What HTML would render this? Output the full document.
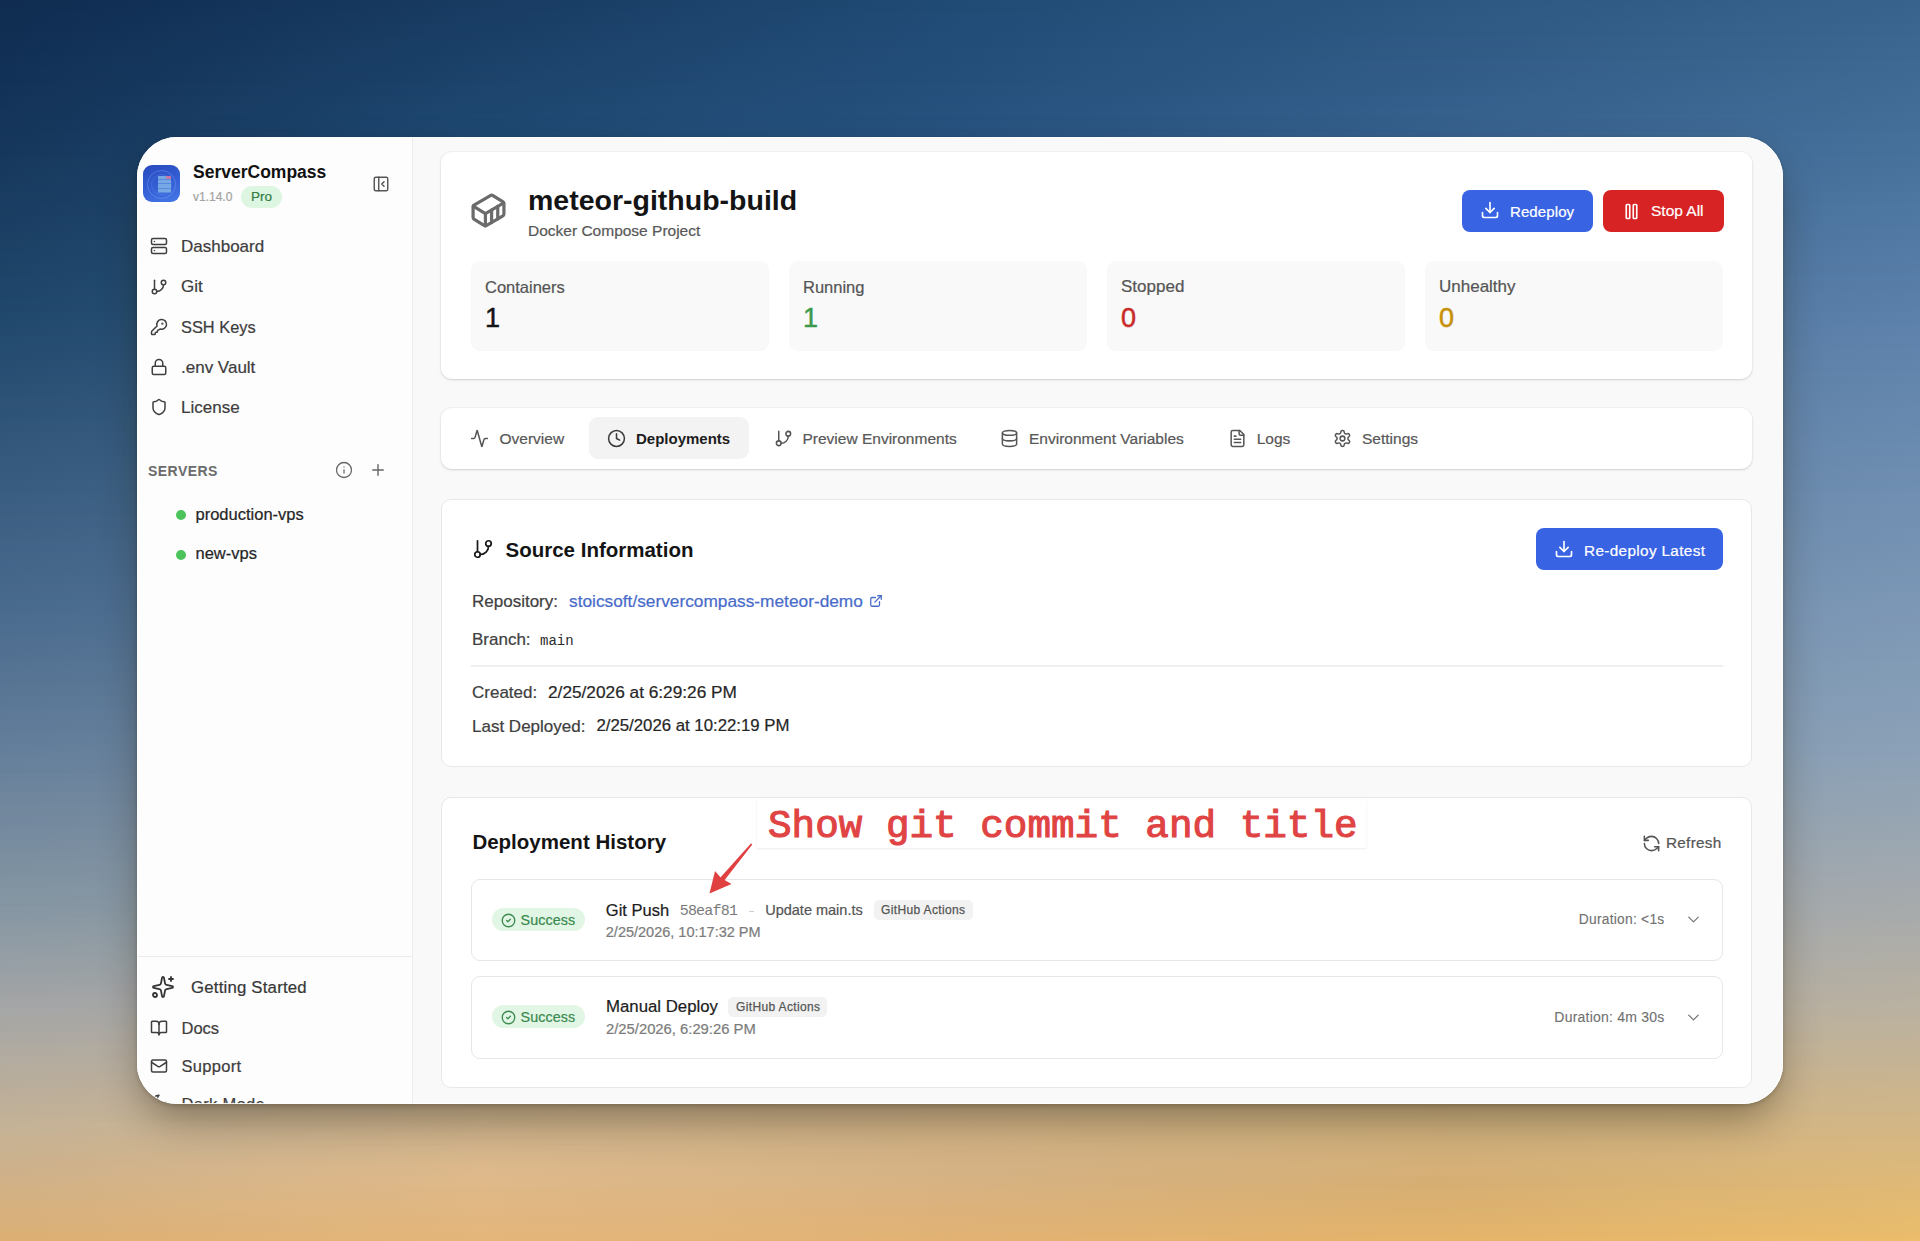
<!DOCTYPE html>
<html><head><meta charset="utf-8">
<style>
*{box-sizing:border-box;margin:0;padding:0}
html,body{width:1920px;height:1241px;overflow:hidden;font-family:"Liberation Sans",sans-serif;color:#1a1a1a;background:#4a6b8e}
#bg div{position:absolute;left:0;width:1920px;height:6px}
.a{position:absolute;white-space:nowrap}
#win{position:absolute;left:137px;top:137px;width:1646px;height:967px;border-radius:40px;overflow:hidden;background:#f9f9f9;box-shadow:0 20px 44px -8px rgba(35,25,5,0.45),0 2px 4px rgba(20,15,0,0.18)}
#inner{position:absolute;left:-137px;top:-137px;width:1920px;height:1241px}
svg{position:absolute;overflow:visible}
.ic{fill:none;stroke:currentColor;stroke-linecap:round;stroke-linejoin:round}
</style></head><body>
<div id="bg">
<div style="top:0px;background:linear-gradient(90deg,#0f2b50,#183b62,#204b75,#2c5780,#37638c)"></div>
<div style="top:6px;background:linear-gradient(90deg,#0f2c51,#183c63,#204b76,#2d5881,#38648d)"></div>
<div style="top:12px;background:linear-gradient(90deg,#102c51,#193c64,#214c76,#2d5882,#38648e)"></div>
<div style="top:18px;background:linear-gradient(90deg,#102d52,#193d64,#214c77,#2e5982,#39658e)"></div>
<div style="top:24px;background:linear-gradient(90deg,#102d52,#193e65,#214c77,#2e5983,#3a668f)"></div>
<div style="top:30px;background:linear-gradient(90deg,#112e53,#1a3e66,#224d78,#2f5984,#3a668f)"></div>
<div style="top:36px;background:linear-gradient(90deg,#112e53,#1a3f66,#224d78,#2f5a84,#3b6790)"></div>
<div style="top:42px;background:linear-gradient(90deg,#112f54,#1a4067,#224d79,#305a85,#3c6790)"></div>
<div style="top:48px;background:linear-gradient(90deg,#112f54,#1a4068,#234e79,#305b85,#3c6891)"></div>
<div style="top:54px;background:linear-gradient(90deg,#123055,#1b4168,#234e7a,#315b86,#3d6892)"></div>
<div style="top:60px;background:linear-gradient(90deg,#123055,#1b4169,#234e7a,#315c87,#3d6992)"></div>
<div style="top:66px;background:linear-gradient(90deg,#123156,#1b426a,#244f7b,#325c87,#3e6993)"></div>
<div style="top:72px;background:linear-gradient(90deg,#123156,#1c426a,#244f7b,#325c88,#3e6a94)"></div>
<div style="top:78px;background:linear-gradient(90deg,#133156,#1c436b,#244f7b,#325d89,#3f6b94)"></div>
<div style="top:84px;background:linear-gradient(90deg,#133257,#1c446c,#25507c,#335d89,#406b95)"></div>
<div style="top:90px;background:linear-gradient(90deg,#133257,#1c446d,#25507c,#335e8a,#406c95)"></div>
<div style="top:96px;background:linear-gradient(90deg,#143358,#1d456d,#25507d,#345e8b,#416c96)"></div>
<div style="top:102px;background:linear-gradient(90deg,#143358,#1d466e,#26517d,#345f8b,#426d96)"></div>
<div style="top:108px;background:linear-gradient(90deg,#143459,#1d466f,#26517e,#355f8c,#426d97)"></div>
<div style="top:114px;background:linear-gradient(90deg,#143459,#1d476f,#26517e,#35608c,#436e98)"></div>
<div style="top:120px;background:linear-gradient(90deg,#15355a,#1e4770,#27527f,#36608d,#436e98)"></div>
<div style="top:126px;background:linear-gradient(90deg,#15355a,#1e4871,#27527f,#36608e,#446f99)"></div>
<div style="top:132px;background:linear-gradient(90deg,#15365b,#1e4871,#275280,#37618e,#44709a)"></div>
<div style="top:138px;background:linear-gradient(90deg,#16365b,#1f4972,#285380,#37618f,#45709a)"></div>
<div style="top:144px;background:linear-gradient(90deg,#16375c,#1f4a73,#285381,#386290,#46719b)"></div>
<div style="top:150px;background:linear-gradient(90deg,#16375c,#1f4a73,#285381,#386290,#46719b)"></div>
<div style="top:156px;background:linear-gradient(90deg,#17385d,#204b73,#295482,#396391,#47729c)"></div>
<div style="top:162px;background:linear-gradient(90deg,#17395d,#204b74,#2a5582,#3a6491,#48729c)"></div>
<div style="top:168px;background:linear-gradient(90deg,#17395e,#214c74,#2b5582,#3b6491,#49739d)"></div>
<div style="top:174px;background:linear-gradient(90deg,#183a5f,#224c74,#2c5683,#3b6592,#4a749e)"></div>
<div style="top:180px;background:linear-gradient(90deg,#183a5f,#224c75,#2c5683,#3c6592,#4a749e)"></div>
<div style="top:186px;background:linear-gradient(90deg,#183b60,#234d75,#2d5783,#3d6693,#4b759f)"></div>
<div style="top:192px;background:linear-gradient(90deg,#193c60,#234d75,#2e5884,#3e6793,#4c759f)"></div>
<div style="top:198px;background:linear-gradient(90deg,#193c61,#244e76,#2f5884,#3e6793,#4d76a0)"></div>
<div style="top:204px;background:linear-gradient(90deg,#193d62,#254e76,#305985,#3f6894,#4e77a1)"></div>
<div style="top:210px;background:linear-gradient(90deg,#1a3d62,#254f76,#305a85,#406894,#4e77a1)"></div>
<div style="top:216px;background:linear-gradient(90deg,#1a3e63,#264f77,#315a85,#416995,#4f78a2)"></div>
<div style="top:222px;background:linear-gradient(90deg,#1b3f63,#265077,#325b86,#426a95,#5078a2)"></div>
<div style="top:228px;background:linear-gradient(90deg,#1b3f64,#275077,#335c86,#426a96,#5179a3)"></div>
<div style="top:234px;background:linear-gradient(90deg,#1b4064,#275078,#345c87,#436b96,#5279a3)"></div>
<div style="top:240px;background:linear-gradient(90deg,#1c4165,#285178,#345d87,#446b96,#527aa4)"></div>
<div style="top:246px;background:linear-gradient(90deg,#1c4166,#295178,#355e87,#456c97,#537ba5)"></div>
<div style="top:252px;background:linear-gradient(90deg,#1c4266,#295279,#365e88,#456d97,#547ba5)"></div>
<div style="top:258px;background:linear-gradient(90deg,#1d4267,#2a5279,#375f88,#466d98,#557ca6)"></div>
<div style="top:264px;background:linear-gradient(90deg,#1d4367,#2a5379,#385f88,#476e98,#567ca6)"></div>
<div style="top:270px;background:linear-gradient(90deg,#1d4468,#2b537a,#386089,#486e98,#567da7)"></div>
<div style="top:276px;background:linear-gradient(90deg,#1e4469,#2c547a,#396189,#486f99,#577ea8)"></div>
<div style="top:282px;background:linear-gradient(90deg,#1e4569,#2c547a,#3a618a,#497099,#587ea8)"></div>
<div style="top:288px;background:linear-gradient(90deg,#1f466a,#2d547a,#3b628a,#4a709a,#597fa9)"></div>
<div style="top:294px;background:linear-gradient(90deg,#1f466a,#2d557b,#3c638a,#4b719a,#5a7fa9)"></div>
<div style="top:300px;background:linear-gradient(90deg,#1f476b,#2e557b,#3c638b,#4b729a,#5a80aa)"></div>
<div style="top:306px;background:linear-gradient(90deg,#20476b,#2e567b,#3d648b,#4c729b,#5b80aa)"></div>
<div style="top:312px;background:linear-gradient(90deg,#20486c,#2f567c,#3e648c,#4d739b,#5c81ab)"></div>
<div style="top:318px;background:linear-gradient(90deg,#21496d,#30577c,#3f658c,#4e739c,#5d81ab)"></div>
<div style="top:324px;background:linear-gradient(90deg,#22496d,#31587d,#3f668c,#4e749c,#5d82ab)"></div>
<div style="top:330px;background:linear-gradient(90deg,#234a6e,#31587d,#40668d,#4f749c,#5e82ac)"></div>
<div style="top:336px;background:linear-gradient(90deg,#234b6f,#32597e,#41678d,#50759d,#5f83ac)"></div>
<div style="top:342px;background:linear-gradient(90deg,#244c6f,#33597f,#42678e,#51759d,#5f83ac)"></div>
<div style="top:348px;background:linear-gradient(90deg,#254c70,#345a7f,#42688e,#51769d,#6084ac)"></div>
<div style="top:354px;background:linear-gradient(90deg,#264d71,#355b80,#43698f,#52769e,#6184ad)"></div>
<div style="top:360px;background:linear-gradient(90deg,#274e71,#355b80,#44698f,#53779e,#6185ad)"></div>
<div style="top:366px;background:linear-gradient(90deg,#284e72,#365c81,#456a90,#53779e,#6285ad)"></div>
<div style="top:372px;background:linear-gradient(90deg,#284f73,#375d81,#466a90,#54789f,#6386ad)"></div>
<div style="top:378px;background:linear-gradient(90deg,#295073,#385d82,#466b90,#55789f,#6386ad)"></div>
<div style="top:384px;background:linear-gradient(90deg,#2a5074,#395e83,#476b91,#55799f,#6487ae)"></div>
<div style="top:390px;background:linear-gradient(90deg,#2b5175,#395f83,#486c91,#567aa0,#6587ae)"></div>
<div style="top:396px;background:linear-gradient(90deg,#2c5276,#3a5f84,#486d92,#577aa0,#6587ae)"></div>
<div style="top:402px;background:linear-gradient(90deg,#2d5276,#3b6084,#496d92,#587ba0,#6688ae)"></div>
<div style="top:408px;background:linear-gradient(90deg,#2d5377,#3c6085,#4a6e93,#587ba1,#6788af)"></div>
<div style="top:414px;background:linear-gradient(90deg,#2e5478,#3d6185,#4b6e93,#597ca1,#6789af)"></div>
<div style="top:420px;background:linear-gradient(90deg,#2f5578,#3d6286,#4c6f94,#5a7ca1,#6889af)"></div>
<div style="top:426px;background:linear-gradient(90deg,#305579,#3e6286,#4c7094,#5a7da2,#698aaf)"></div>
<div style="top:432px;background:linear-gradient(90deg,#31567a,#3f6387,#4d7094,#5b7da2,#698aaf)"></div>
<div style="top:438px;background:linear-gradient(90deg,#32577a,#406488,#4e7195,#5c7ea2,#6a8bb0)"></div>
<div style="top:444px;background:linear-gradient(90deg,#32577b,#406488,#4e7195,#5d7ea3,#6b8bb0)"></div>
<div style="top:450px;background:linear-gradient(90deg,#33587c,#416589,#4f7296,#5d7fa3,#6b8cb0)"></div>
<div style="top:456px;background:linear-gradient(90deg,#34597c,#426689,#507296,#5e7fa3,#6c8cb0)"></div>
<div style="top:462px;background:linear-gradient(90deg,#355a7d,#43668a,#517397,#5f80a4,#6c8cb0)"></div>
<div style="top:468px;background:linear-gradient(90deg,#365a7e,#44678a,#527497,#5f80a4,#6d8db1)"></div>
<div style="top:474px;background:linear-gradient(90deg,#375b7e,#44688b,#527498,#6081a4,#6e8db1)"></div>
<div style="top:480px;background:linear-gradient(90deg,#385c7f,#45688c,#537598,#6181a5,#6e8eb1)"></div>
<div style="top:486px;background:linear-gradient(90deg,#385c80,#46698c,#547599,#6182a5,#6f8eb1)"></div>
<div style="top:492px;background:linear-gradient(90deg,#395d80,#47698d,#547699,#6282a5,#708fb2)"></div>
<div style="top:498px;background:linear-gradient(90deg,#3a5e81,#486a8d,#557699,#6383a6,#708fb2)"></div>
<div style="top:504px;background:linear-gradient(90deg,#3b5e82,#486b8e,#56779a,#6483a6,#7190b2)"></div>
<div style="top:510px;background:linear-gradient(90deg,#3c5f82,#496b8e,#57789a,#6484a6,#7290b2)"></div>
<div style="top:516px;background:linear-gradient(90deg,#3d6083,#4a6c8f,#58789b,#6584a7,#7291b2)"></div>
<div style="top:522px;background:linear-gradient(90deg,#3d6084,#4b6d90,#58799b,#6685a7,#7391b3)"></div>
<div style="top:528px;background:linear-gradient(90deg,#3e6184,#4c6d90,#59799c,#6685a7,#7492b3)"></div>
<div style="top:534px;background:linear-gradient(90deg,#3f6285,#4c6e91,#5a7a9c,#6786a8,#7492b3)"></div>
<div style="top:540px;background:linear-gradient(90deg,#406386,#4d6f91,#5a7b9d,#6887a8,#7592b3)"></div>
<div style="top:546px;background:linear-gradient(90deg,#416387,#4e6f92,#5b7b9d,#6887a8,#7693b4)"></div>
<div style="top:552px;background:linear-gradient(90deg,#426487,#4f7092,#5c7c9e,#6988a9,#7693b4)"></div>
<div style="top:558px;background:linear-gradient(90deg,#426588,#507093,#5d7c9e,#6a88a9,#7794b4)"></div>
<div style="top:564px;background:linear-gradient(90deg,#436589,#507193,#5e7d9e,#6b89a9,#7894b4)"></div>
<div style="top:570px;background:linear-gradient(90deg,#446689,#517294,#5e7d9f,#6b89aa,#7895b4)"></div>
<div style="top:576px;background:linear-gradient(90deg,#45678a,#527295,#5f7e9f,#6c8aaa,#7995b5)"></div>
<div style="top:582px;background:linear-gradient(90deg,#46688b,#537395,#607fa0,#6d8aaa,#7a96b5)"></div>
<div style="top:588px;background:linear-gradient(90deg,#47688b,#547496,#607fa0,#6d8bab,#7a96b5)"></div>
<div style="top:594px;background:linear-gradient(90deg,#47698c,#547496,#6180a1,#6e8bab,#7b97b5)"></div>
<div style="top:600px;background:linear-gradient(90deg,#486a8d,#557597,#6280a1,#6f8cab,#7c97b6)"></div>
<div style="top:606px;background:linear-gradient(90deg,#496a8d,#567697,#6381a2,#708cac,#7c98b6)"></div>
<div style="top:612px;background:linear-gradient(90deg,#4a6b8e,#577698,#6482a2,#708dac,#7d98b6)"></div>
<div style="top:618px;background:linear-gradient(90deg,#4b6c8f,#587798,#6482a2,#718dac,#7e98b6)"></div>
<div style="top:624px;background:linear-gradient(90deg,#4c6d8f,#597899,#6583a3,#728eac,#7e99b6)"></div>
<div style="top:630px;background:linear-gradient(90deg,#4d6e90,#5a7899,#6683a3,#738eac,#7f99b6)"></div>
<div style="top:636px;background:linear-gradient(90deg,#4f6e90,#5b799a,#6784a3,#738fad,#7f9ab6)"></div>
<div style="top:642px;background:linear-gradient(90deg,#506f91,#5c7a9a,#6885a3,#748fad,#809ab6)"></div>
<div style="top:648px;background:linear-gradient(90deg,#517091,#5d7b9a,#6985a4,#7590ad,#819ab6)"></div>
<div style="top:654px;background:linear-gradient(90deg,#527192,#5e7b9b,#6a86a4,#7690ad,#819bb6)"></div>
<div style="top:660px;background:linear-gradient(90deg,#537292,#5f7c9b,#6b86a4,#7691ad,#829bb6)"></div>
<div style="top:666px;background:linear-gradient(90deg,#547393,#607d9c,#6c87a5,#7791ae,#839cb6)"></div>
<div style="top:672px;background:linear-gradient(90deg,#567393,#617e9c,#6c88a5,#7892ae,#839cb6)"></div>
<div style="top:678px;background:linear-gradient(90deg,#577494,#627e9d,#6d88a5,#7992ae,#849cb6)"></div>
<div style="top:684px;background:linear-gradient(90deg,#587594,#637f9d,#6e89a5,#7993ae,#849db7)"></div>
<div style="top:690px;background:linear-gradient(90deg,#597695,#64809d,#6f8aa6,#7a93ae,#859db7)"></div>
<div style="top:696px;background:linear-gradient(90deg,#5a7795,#65819e,#708aa6,#7b94ae,#869eb7)"></div>
<div style="top:702px;background:linear-gradient(90deg,#5b7896,#66819e,#718ba6,#7c94ae,#869eb7)"></div>
<div style="top:708px;background:linear-gradient(90deg,#5c7997,#67829f,#728ba7,#7c95af,#879eb7)"></div>
<div style="top:714px;background:linear-gradient(90deg,#5e7997,#68839f,#738ca7,#7d95af,#889fb7)"></div>
<div style="top:720px;background:linear-gradient(90deg,#5f7a98,#69839f,#748da7,#7e96af,#889fb7)"></div>
<div style="top:726px;background:linear-gradient(90deg,#607b98,#6a84a0,#748da7,#7f96af,#89a0b7)"></div>
<div style="top:732px;background:linear-gradient(90deg,#617c99,#6b85a0,#758ea8,#7f97af,#89a0b7)"></div>
<div style="top:738px;background:linear-gradient(90deg,#627d99,#6c86a1,#768fa8,#8097b0,#8aa0b7)"></div>
<div style="top:744px;background:linear-gradient(90deg,#637e9a,#6d86a1,#778fa8,#8198b0,#8ba1b7)"></div>
<div style="top:750px;background:linear-gradient(90deg,#657e9a,#6e87a1,#7890a8,#8298b0,#8ca1b7)"></div>
<div style="top:756px;background:linear-gradient(90deg,#667f9a,#7088a1,#7990a8,#8399af,#8da2b6)"></div>
<div style="top:762px;background:linear-gradient(90deg,#67809b,#7189a2,#7a91a8,#849aaf,#8ea2b6)"></div>
<div style="top:768px;background:linear-gradient(90deg,#68819b,#7289a2,#7c92a8,#859aaf,#8fa2b6)"></div>
<div style="top:774px;background:linear-gradient(90deg,#6a829b,#738aa2,#7d92a8,#869aaf,#90a3b5)"></div>
<div style="top:780px;background:linear-gradient(90deg,#6b839c,#748ba2,#7e93a8,#879baf,#91a3b5)"></div>
<div style="top:786px;background:linear-gradient(90deg,#6c849c,#768ca2,#7f94a8,#889cae,#92a3b4)"></div>
<div style="top:792px;background:linear-gradient(90deg,#6e859c,#778da2,#8094a8,#8a9cae,#93a4b4)"></div>
<div style="top:798px;background:linear-gradient(90deg,#6f869d,#788da2,#8195a8,#8b9cae,#94a4b4)"></div>
<div style="top:804px;background:linear-gradient(90deg,#70879d,#798ea3,#8396a8,#8c9dae,#95a4b3)"></div>
<div style="top:810px;background:linear-gradient(90deg,#71889d,#7b8fa3,#8496a8,#8d9ead,#96a5b3)"></div>
<div style="top:816px;background:linear-gradient(90deg,#73889e,#7c90a3,#8597a8,#8e9ead,#97a5b2)"></div>
<div style="top:822px;background:linear-gradient(90deg,#74899e,#7d90a3,#8697a8,#8f9ead,#98a6b2)"></div>
<div style="top:828px;background:linear-gradient(90deg,#758a9e,#7e91a3,#8798a8,#909fad,#99a6b2)"></div>
<div style="top:834px;background:linear-gradient(90deg,#768b9f,#7f92a3,#8899a8,#91a0ad,#9aa6b1)"></div>
<div style="top:840px;background:linear-gradient(90deg,#788c9f,#8193a4,#8a99a8,#92a0ac,#9ba7b1)"></div>
<div style="top:846px;background:linear-gradient(90deg,#798d9f,#8294a4,#8b9aa8,#94a0ac,#9ca7b0)"></div>
<div style="top:852px;background:linear-gradient(90deg,#7a8ea0,#8394a4,#8c9ba8,#95a1ac,#9da7b0)"></div>
<div style="top:858px;background:linear-gradient(90deg,#7c8fa0,#8495a4,#8d9ba8,#96a2ac,#9fa8b0)"></div>
<div style="top:864px;background:linear-gradient(90deg,#7d90a0,#8696a4,#8e9ca8,#97a2ab,#a0a8af)"></div>
<div style="top:870px;background:linear-gradient(90deg,#7e91a1,#8797a4,#8f9da8,#98a2ab,#a1a8af)"></div>
<div style="top:876px;background:linear-gradient(90deg,#7f92a1,#8897a4,#919da8,#99a3ab,#a2a9ae)"></div>
<div style="top:882px;background:linear-gradient(90deg,#8192a1,#8998a5,#929ea8,#9aa4ab,#a3a9ae)"></div>
<div style="top:888px;background:linear-gradient(90deg,#8293a2,#8a99a5,#939ea8,#9ba4ab,#a4aaae)"></div>
<div style="top:894px;background:linear-gradient(90deg,#8394a2,#8c9aa5,#949fa8,#9ca4aa,#a5aaad)"></div>
<div style="top:900px;background:linear-gradient(90deg,#8495a2,#8d9aa5,#95a0a8,#9ea5aa,#a6aaad)"></div>
<div style="top:906px;background:linear-gradient(90deg,#8696a3,#8e9ba5,#96a0a8,#9fa6aa,#a7abac)"></div>
<div style="top:912px;background:linear-gradient(90deg,#8797a3,#8f9ca5,#98a1a8,#a0a6aa,#a8abac)"></div>
<div style="top:918px;background:linear-gradient(90deg,#8998a3,#919da5,#99a2a7,#a1a7a9,#a9abab)"></div>
<div style="top:924px;background:linear-gradient(90deg,#8b99a3,#939ea5,#9ba2a7,#a2a7a9,#aaacaa)"></div>
<div style="top:930px;background:linear-gradient(90deg,#8d9aa4,#949ea5,#9ca3a7,#a4a8a8,#abacaa)"></div>
<div style="top:936px;background:linear-gradient(90deg,#8f9ba4,#969fa5,#9ea4a6,#a5a8a8,#adada9)"></div>
<div style="top:942px;background:linear-gradient(90deg,#909ca4,#98a0a5,#9fa4a6,#a6a9a7,#aeada8)"></div>
<div style="top:948px;background:linear-gradient(90deg,#929da4,#99a1a5,#a1a5a6,#a8a9a7,#afada7)"></div>
<div style="top:954px;background:linear-gradient(90deg,#949ea4,#9ba2a5,#a2a6a6,#a9aaa6,#b0aea7)"></div>
<div style="top:960px;background:linear-gradient(90deg,#969fa5,#9da2a5,#a4a6a5,#aaaaa6,#b1aea6)"></div>
<div style="top:966px;background:linear-gradient(90deg,#98a0a5,#9fa3a5,#a5a7a5,#acaba5,#b2aea5)"></div>
<div style="top:972px;background:linear-gradient(90deg,#9aa0a5,#a0a4a5,#a7a8a5,#adaba5,#b3afa4)"></div>
<div style="top:978px;background:linear-gradient(90deg,#9ca1a5,#a2a5a5,#a8a8a4,#aeaca4,#b5afa4)"></div>
<div style="top:984px;background:linear-gradient(90deg,#9ea2a5,#a4a6a5,#aaa9a4,#b0aca3,#b6b0a3)"></div>
<div style="top:990px;background:linear-gradient(90deg,#a0a3a5,#a5a6a5,#abaaa4,#b1ada3,#b7b0a2)"></div>
<div style="top:996px;background:linear-gradient(90deg,#a2a4a6,#a7a7a5,#adaaa4,#b2ada2,#b8b0a1)"></div>
<div style="top:1002px;background:linear-gradient(90deg,#a3a5a6,#a9a8a5,#aeaba3,#b4aea2,#b9b1a1)"></div>
<div style="top:1008px;background:linear-gradient(90deg,#a5a6a6,#aba9a4,#b0aca3,#b5aea1,#bab1a0)"></div>
<div style="top:1014px;background:linear-gradient(90deg,#a7a7a5,#adaaa3,#b2aca1,#b6af9f,#bcb19e)"></div>
<div style="top:1020px;background:linear-gradient(90deg,#a8a7a4,#afaaa2,#b3aca0,#b8af9e,#bdb29d)"></div>
<div style="top:1026px;background:linear-gradient(90deg,#aaa8a3,#b1aba1,#b5ad9f,#b9af9c,#beb29c)"></div>
<div style="top:1032px;background:linear-gradient(90deg,#aca8a3,#b3aca0,#b7ad9d,#bbaf9a,#bfb29a)"></div>
<div style="top:1038px;background:linear-gradient(90deg,#ada9a2,#b5ac9f,#b8ad9c,#bcaf99,#c1b299)"></div>
<div style="top:1044px;background:linear-gradient(90deg,#afaaa1,#b7ad9e,#baae9a,#beb097,#c2b398)"></div>
<div style="top:1050px;background:linear-gradient(90deg,#b0aaa0,#b8ad9d,#bcae99,#bfb095,#c3b396)"></div>
<div style="top:1056px;background:linear-gradient(90deg,#b2ab9f,#baae9c,#beaf98,#c1b093,#c5b395)"></div>
<div style="top:1062px;background:linear-gradient(90deg,#b4ac9f,#bcaf9b,#bfaf96,#c2b092,#c6b394)"></div>
<div style="top:1068px;background:linear-gradient(90deg,#b5ac9e,#beaf9a,#c1af95,#c4b190,#c7b492)"></div>
<div style="top:1074px;background:linear-gradient(90deg,#b7ad9d,#c0b098,#c3b093,#c5b18e,#c9b491)"></div>
<div style="top:1080px;background:linear-gradient(90deg,#b8ad9c,#c2b197,#c4b092,#c7b18d,#cab490)"></div>
<div style="top:1086px;background:linear-gradient(90deg,#baae9b,#c4b196,#c6b091,#c8b18b,#cbb48e)"></div>
<div style="top:1092px;background:linear-gradient(90deg,#bcae9b,#c6b295,#c8b18f,#c9b289,#ccb58d)"></div>
<div style="top:1098px;background:linear-gradient(90deg,#bdaf9a,#c8b394,#cab18e,#cbb287,#ceb58c)"></div>
<div style="top:1104px;background:linear-gradient(90deg,#bfb099,#cab393,#cbb28c,#ccb286,#cfb58a)"></div>
<div style="top:1110px;background:linear-gradient(90deg,#c0b098,#ccb492,#cdb28b,#ceb284,#d0b589)"></div>
<div style="top:1116px;background:linear-gradient(90deg,#c2b197,#ceb591,#cfb28a,#cfb382,#d2b687)"></div>
<div style="top:1122px;background:linear-gradient(90deg,#c4b297,#d0b590,#d1b388,#d1b380,#d3b686)"></div>
<div style="top:1128px;background:linear-gradient(90deg,#c5b296,#d2b68f,#d2b387,#d2b37f,#d4b685)"></div>
<div style="top:1134px;background:linear-gradient(90deg,#c7b294,#d4b68e,#d3b386,#d2b27d,#d5b683)"></div>
<div style="top:1140px;background:linear-gradient(90deg,#c8b292,#d5b78e,#d3b386,#d3b27c,#d7b782)"></div>
<div style="top:1146px;background:linear-gradient(90deg,#c9b291,#d7b78d,#d4b385,#d3b17b,#d8b780)"></div>
<div style="top:1152px;background:linear-gradient(90deg,#cab28f,#d8b88c,#d4b285,#d4b07a,#d9b87e)"></div>
<div style="top:1158px;background:linear-gradient(90deg,#ccb18d,#dab88c,#d4b285,#d4b078,#dab87d)"></div>
<div style="top:1164px;background:linear-gradient(90deg,#cdb18c,#dcb88b,#d5b284,#d4af77,#dbb87b)"></div>
<div style="top:1170px;background:linear-gradient(90deg,#ceb18a,#ddb98b,#d5b284,#d5af76,#ddb97a)"></div>
<div style="top:1176px;background:linear-gradient(90deg,#d0b188,#dfb98a,#d6b283,#d5ae74,#deb978)"></div>
<div style="top:1182px;background:linear-gradient(90deg,#d1b186,#dfb989,#d7b282,#d6ae73,#dfb977)"></div>
<div style="top:1188px;background:linear-gradient(90deg,#d2b184,#e0b887,#d8b280,#d8af72,#e0ba75)"></div>
<div style="top:1194px;background:linear-gradient(90deg,#d3b182,#e0b886,#d9b27f,#d9b071,#e2ba74)"></div>
<div style="top:1200px;background:linear-gradient(90deg,#d5b180,#e1b884,#dbb27d,#dbb070,#e3bb73)"></div>
<div style="top:1206px;background:linear-gradient(90deg,#d6b17e,#e1b882,#dcb27b,#dcb16f,#e4bb71)"></div>
<div style="top:1212px;background:linear-gradient(90deg,#d7b07d,#e2b781,#ddb27a,#deb16e,#e5bb70)"></div>
<div style="top:1218px;background:linear-gradient(90deg,#d8b07b,#e2b77f,#deb278,#dfb26d,#e7bc6f)"></div>
<div style="top:1224px;background:linear-gradient(90deg,#d9b079,#e3b77e,#dfb277,#e1b36c,#e8bc6d)"></div>
<div style="top:1230px;background:linear-gradient(90deg,#dab077,#e3b67c,#e0b275,#e2b36b,#e9bc6c)"></div>
<div style="top:1236px;background:linear-gradient(90deg,#dcb075,#e4b67b,#e2b274,#e4b46a,#ebbd6a)"></div>
</div>
<div id="win"><div id="inner">
<div class="a" style="left:137px;top:137px;width:276px;height:967px;background:#fdfdfd"></div>
<div class="a" style="left:412px;top:137px;width:1px;height:967px;background:#ededed"></div>
<div class="a" style="left:143px;top:165px;width:37px;height:37px;border-radius:9px;background:linear-gradient(160deg,#2849bd,#3660d6 55%,#4579e6);overflow:hidden">
<div class="a" style="left:4px;top:5px;width:29px;height:29px;border-radius:50%;border:1px solid rgba(140,180,255,0.35)"></div>
<div class="a" style="left:8px;top:9px;width:21px;height:21px;border-radius:50%;border:1px solid rgba(140,180,255,0.18)"></div>
<div class="a" style="left:15px;top:11px;width:13px;height:17px;background:repeating-linear-gradient(180deg,#7db0e6 0 3.2px,#5b8fe0 3.2px 4.2px);opacity:.9"></div>
<div class="a" style="left:23px;top:11px;width:5px;height:3px;background:#d5709a;opacity:.85"></div>
</div>
<div class="a" style="left:193px;top:164.12px;font-size:17.5px;line-height:17.5px;color:#111;font-weight:bold;font-family:'Liberation Sans'">ServerCompass</div>
<div class="a" style="left:193px;top:190.80px;font-size:12px;line-height:12px;color:#a3a3a3;font-weight:normal;font-family:'Liberation Sans';-webkit-text-stroke:0.22px #a3a3a3">v1.14.0</div>
<div class="a" style="left:241px;top:186px;width:41px;height:22px;background:#dcf6e1;border-radius:11px"></div>
<div class="a" style="left:251px;top:189.53px;font-size:13.5px;line-height:13.5px;color:#2f7d45;font-weight:normal;font-family:'Liberation Sans';-webkit-text-stroke:0.22px #2f7d45">Pro</div>
<svg class="ic" style="left:372.3px;top:174.7px;color:#555" width="18" height="18" viewBox="0 0 24 24" stroke-width="1.9"><rect width="18" height="18" x="3" y="3" rx="2"/><path d="M9 3v18"/><path d="m16 15-3-3 3-3"/></svg>
<svg class="ic" style="left:150px;top:237px;color:#3f3f3f" width="18" height="18" viewBox="0 0 24 24" stroke-width="2"><rect width="20" height="8" x="2" y="2" rx="2" ry="2"/><rect width="20" height="8" x="2" y="14" rx="2" ry="2"/><line x1="6" x2="6.01" y1="6" y2="6"/><line x1="6" x2="6.01" y1="18" y2="18"/></svg>
<div class="a" style="left:181px;top:237.55px;font-size:17px;line-height:17px;color:#3d3d3d;font-weight:normal;font-family:'Liberation Sans';-webkit-text-stroke:0.22px #3d3d3d">Dashboard</div>
<svg class="ic" style="left:150px;top:277.7px;color:#3f3f3f" width="18" height="18" viewBox="0 0 24 24" stroke-width="2"><line x1="6" x2="6" y1="3" y2="15"/><circle cx="18" cy="6" r="3"/><circle cx="6" cy="18" r="3"/><path d="M18 9a9 9 0 0 1-9 9"/></svg>
<div class="a" style="left:181px;top:278.25px;font-size:17px;line-height:17px;color:#3d3d3d;font-weight:normal;font-family:'Liberation Sans';-webkit-text-stroke:0.22px #3d3d3d">Git</div>
<svg class="ic" style="left:150px;top:318px;color:#3f3f3f" width="18" height="18" viewBox="0 0 24 24" stroke-width="2"><path d="M2.586 17.414A2 2 0 0 0 2 18.828V21a1 1 0 0 0 1 1h3a1 1 0 0 0 1-1v-1a1 1 0 0 1 1-1h1a1 1 0 0 0 1-1v-1a1 1 0 0 1 1-1h.172a2 2 0 0 0 1.414-.586l.814-.814a6.5 6.5 0 1 0-4-4z"/><circle cx="16.5" cy="7.5" r=".5" fill="currentColor"/></svg>
<div class="a" style="left:181px;top:319.06px;font-size:16.4px;line-height:16.4px;color:#3d3d3d;font-weight:normal;font-family:'Liberation Sans';-webkit-text-stroke:0.22px #3d3d3d">SSH Keys</div>
<svg class="ic" style="left:150px;top:358.4px;color:#3f3f3f" width="18" height="18" viewBox="0 0 24 24" stroke-width="2"><rect width="18" height="11" x="3" y="11" rx="2" ry="2"/><path d="M7 11V7a5 5 0 0 1 10 0v4"/></svg>
<div class="a" style="left:181px;top:358.95px;font-size:17px;line-height:17px;color:#3d3d3d;font-weight:normal;font-family:'Liberation Sans';-webkit-text-stroke:0.22px #3d3d3d">.env Vault</div>
<svg class="ic" style="left:150px;top:398.3px;color:#3f3f3f" width="18" height="18" viewBox="0 0 24 24" stroke-width="2"><path d="M20 13c0 5-3.5 7.5-7.66 8.95a1 1 0 0 1-.67-.01C7.5 20.5 4 18 4 13V6a1 1 0 0 1 1-1c2 0 4.5-1.2 6.24-2.72a1.17 1.17 0 0 1 1.52 0C14.51 3.81 17 5 19 5a1 1 0 0 1 1 1z"/></svg>
<div class="a" style="left:181px;top:398.85px;font-size:17px;line-height:17px;color:#3d3d3d;font-weight:normal;font-family:'Liberation Sans';-webkit-text-stroke:0.22px #3d3d3d">License</div>
<div class="a" style="left:148px;top:464.10px;font-size:14px;line-height:14px;color:#6b6b6b;font-weight:bold;font-family:'Liberation Sans';letter-spacing:0.45px">SERVERS</div>
<svg class="ic" style="left:335px;top:461px;color:#666" width="18" height="18" viewBox="0 0 24 24" stroke-width="1.7"><circle cx="12" cy="12" r="10"/><path d="M12 16v-4"/><path d="M12 8h.01"/></svg>
<svg class="ic" style="left:369px;top:461px;color:#666" width="18" height="18" viewBox="0 0 24 24" stroke-width="1.9"><path d="M5 12h14"/><path d="M12 5v14"/></svg>
<div class="a" style="left:175.5px;top:509.6px;width:10px;height:10px;background:#4bc35b;border-radius:50%"></div>
<div class="a" style="left:195.5px;top:505.68px;font-size:16.5px;line-height:16.5px;color:#262626;font-weight:normal;font-family:'Liberation Sans';-webkit-text-stroke:0.22px #262626">production-vps</div>
<div class="a" style="left:175.5px;top:549.5px;width:10px;height:10px;background:#4bc35b;border-radius:50%"></div>
<div class="a" style="left:195.5px;top:545.27px;font-size:16.5px;line-height:16.5px;color:#262626;font-weight:normal;font-family:'Liberation Sans';-webkit-text-stroke:0.22px #262626">new-vps</div>
<div class="a" style="left:137px;top:956px;width:276px;height:1px;background:#ececec"></div>
<svg class="ic" style="left:151px;top:975px;color:#333" width="24" height="24" viewBox="0 0 24 24" stroke-width="1.8"><path d="M11.017 2.814a1 1 0 0 1 1.966 0l1.051 5.558a2 2 0 0 0 1.594 1.594l5.558 1.051a1 1 0 0 1 0 1.966l-5.558 1.051a2 2 0 0 0-1.594 1.594l-1.051 5.558a1 1 0 0 1-1.966 0l-1.051-5.558a2 2 0 0 0-1.594-1.594l-5.558-1.051a1 1 0 0 1 0-1.966l5.558-1.051a2 2 0 0 0 1.594-1.594z"/><path d="M20 2v4"/><path d="M22 4h-4"/><circle cx="4" cy="20" r="2"/></svg>
<div class="a" style="left:191px;top:980.02px;font-size:16.8px;line-height:16.8px;color:#383838;font-weight:normal;font-family:'Liberation Sans';letter-spacing:0.2px;-webkit-text-stroke:0.22px #383838">Getting Started</div>
<svg class="ic" style="left:150px;top:1019px;color:#3f3f3f" width="18" height="18" viewBox="0 0 24 24" stroke-width="2"><path d="M12 7v14"/><path d="M3 18a1 1 0 0 1-1-1V4a1 1 0 0 1 1-1h5a4 4 0 0 1 4 4 4 4 0 0 1 4-4h5a1 1 0 0 1 1 1v13a1 1 0 0 1-1 1h-6a3 3 0 0 0-3 3 3 3 0 0 0-3-3z"/></svg>
<div class="a" style="left:181.5px;top:1019.77px;font-size:16.5px;line-height:16.5px;color:#3d3d3d;font-weight:normal;font-family:'Liberation Sans';-webkit-text-stroke:0.22px #3d3d3d">Docs</div>
<svg class="ic" style="left:150px;top:1057px;color:#3f3f3f" width="18" height="18" viewBox="0 0 24 24" stroke-width="2"><rect width="20" height="16" x="2" y="4" rx="2"/><path d="m22 7-8.97 5.7a1.94 1.94 0 0 1-2.06 0L2 7"/></svg>
<div class="a" style="left:181.5px;top:1058.47px;font-size:16.5px;line-height:16.5px;color:#3d3d3d;font-weight:normal;font-family:'Liberation Sans';letter-spacing:0.3px;-webkit-text-stroke:0.22px #3d3d3d">Support</div>
<svg class="ic" style="left:150px;top:1092.5px;color:#3f3f3f" width="18" height="18" viewBox="0 0 24 24" stroke-width="2"><path d="M12 3a6 6 0 0 0 9 9 9 9 0 1 1-9-9Z"/></svg>
<div class="a" style="left:181.5px;top:1095.97px;font-size:16.5px;line-height:16.5px;color:#3d3d3d;font-weight:normal;font-family:'Liberation Sans';letter-spacing:0.3px;-webkit-text-stroke:0.22px #3d3d3d">Dark Mode</div>
<div class="a" style="left:413px;top:137px;width:1370px;height:967px;background:#f9f9f9"></div>
<div class="a" style="left:441px;top:152px;width:1311px;height:227px;background:#fff;border-radius:11px;box-shadow:0 1px 3px rgba(0,0,0,0.11),0 1px 1px rgba(0,0,0,0.04),0 0 0 1px rgba(0,0,0,0.025)"></div>
<svg class="ic" style="left:470px;top:192px;color:#6b6b6b" width="37" height="37" viewBox="0 0 24 24" stroke-width="2.1"><path d="M22 7.7c0-.6-.4-1.2-.8-1.5l-6.3-3.9a1.72 1.72 0 0 0-1.7 0l-10.3 6c-.5.2-.9.8-.9 1.4v6.6c0 .5.4 1.2.8 1.5l6.3 3.9a1.72 1.72 0 0 0 1.7 0l10.3-6c.5-.3.9-1 .9-1.5Z"/><path d="M10 21.9V14L2.1 9.1"/><path d="m10 14 11.9-6.9"/><path d="M14 19.8v-8.1"/><path d="M18 17.5V9.4"/></svg>
<div class="a" style="left:528px;top:185.78px;font-size:28.5px;line-height:28.5px;color:#141414;font-weight:bold;font-family:'Liberation Sans'">meteor-github-build</div>
<div class="a" style="left:528px;top:223.22px;font-size:15.5px;line-height:15.5px;color:#585858;font-weight:normal;font-family:'Liberation Sans';-webkit-text-stroke:0.22px #585858">Docker Compose Project</div>
<div class="a" style="left:1462px;top:190px;width:131px;height:42px;background:#3863e3;border-radius:8px"></div>
<svg class="ic" style="left:1480px;top:200px;color:#fff" width="20" height="20" viewBox="0 0 24 24" stroke-width="2"><path d="M21 15v4a2 2 0 0 1-2 2H5a2 2 0 0 1-2-2v-4"/><polyline points="7 10 12 15 17 10"/><line x1="12" x2="12" y1="15" y2="3"/></svg>
<div class="a" style="left:1510px;top:204.05px;font-size:15px;line-height:15px;color:#fff;font-weight:normal;font-family:'Liberation Sans';letter-spacing:0.1px;-webkit-text-stroke:0.22px #fff">Redeploy</div>
<div class="a" style="left:1603px;top:190px;width:121px;height:42px;background:#d72323;border-radius:8px"></div>
<svg class="ic" style="left:1621px;top:201px;color:#fff" width="21" height="21" viewBox="0 0 24 24" stroke-width="1.9"><rect x="14" y="4" width="4" height="16" rx="1"/><rect x="6" y="4" width="4" height="16" rx="1"/></svg>
<div class="a" style="left:1651px;top:203.42px;font-size:15.5px;line-height:15.5px;color:#fff;font-weight:normal;font-family:'Liberation Sans';-webkit-text-stroke:0.22px #fff">Stop All</div>
<div class="a" style="left:471px;top:261px;width:298px;height:89px;background:#f9f9f9;border-radius:9px;box-shadow:0 1px 1px rgba(0,0,0,0.03)"></div>
<div class="a" style="left:485px;top:278.88px;font-size:16.5px;line-height:16.5px;color:#555;font-weight:normal;font-family:'Liberation Sans';-webkit-text-stroke:0.22px #555">Containers</div>
<div class="a" style="left:485px;top:305.05px;font-size:27px;line-height:27px;color:#141414;font-weight:normal;font-family:'Liberation Sans';-webkit-text-stroke:0.5px #141414">1</div>
<div class="a" style="left:789px;top:261px;width:298px;height:89px;background:#f9f9f9;border-radius:9px;box-shadow:0 1px 1px rgba(0,0,0,0.03)"></div>
<div class="a" style="left:803px;top:278.88px;font-size:16.5px;line-height:16.5px;color:#555;font-weight:normal;font-family:'Liberation Sans';-webkit-text-stroke:0.22px #555">Running</div>
<div class="a" style="left:803px;top:305.05px;font-size:27px;line-height:27px;color:#3d9a4d;font-weight:normal;font-family:'Liberation Sans';-webkit-text-stroke:0.5px #3d9a4d">1</div>
<div class="a" style="left:1107px;top:261px;width:298px;height:89px;background:#f9f9f9;border-radius:9px;box-shadow:0 1px 1px rgba(0,0,0,0.03)"></div>
<div class="a" style="left:1121px;top:278.45px;font-size:17px;line-height:17px;color:#555;font-weight:normal;font-family:'Liberation Sans';-webkit-text-stroke:0.22px #555">Stopped</div>
<div class="a" style="left:1121px;top:305.05px;font-size:27px;line-height:27px;color:#c92a2a;font-weight:normal;font-family:'Liberation Sans';-webkit-text-stroke:0.5px #c92a2a">0</div>
<div class="a" style="left:1425px;top:261px;width:298px;height:89px;background:#f9f9f9;border-radius:9px;box-shadow:0 1px 1px rgba(0,0,0,0.03)"></div>
<div class="a" style="left:1439px;top:278.45px;font-size:17px;line-height:17px;color:#555;font-weight:normal;font-family:'Liberation Sans';-webkit-text-stroke:0.22px #555">Unhealthy</div>
<div class="a" style="left:1439px;top:305.05px;font-size:27px;line-height:27px;color:#c8900a;font-weight:normal;font-family:'Liberation Sans';-webkit-text-stroke:0.5px #c8900a">0</div>
<div class="a" style="left:441px;top:408px;width:1311px;height:61px;background:#fff;border-radius:11px;box-shadow:0 1px 3px rgba(0,0,0,0.11),0 1px 1px rgba(0,0,0,0.04),0 0 0 1px rgba(0,0,0,0.025)"></div>
<div class="a" style="left:589px;top:417px;width:160px;height:42px;background:#f3f3f3;border-radius:9px"></div>
<svg class="ic" style="left:470px;top:429px;color:#555" width="19" height="19" viewBox="0 0 24 24" stroke-width="1.9"><path d="M22 12h-2.48a2 2 0 0 0-1.93 1.46l-2.35 8.36a.25.25 0 0 1-.48 0L9.24 2.18a.25.25 0 0 0-.48 0l-2.35 8.36A2 2 0 0 1 4.49 12H2"/></svg>
<div class="a" style="left:499.5px;top:430.82px;font-size:15.5px;line-height:15.5px;color:#585858;font-weight:normal;font-family:'Liberation Sans';-webkit-text-stroke:0.22px #585858">Overview</div>
<svg class="ic" style="left:607px;top:429px;color:#3a3a3a" width="19" height="19" viewBox="0 0 24 24" stroke-width="1.9"><circle cx="12" cy="12" r="10"/><polyline points="12 6 12 12 16 14"/></svg>
<div class="a" style="left:636px;top:431.25px;font-size:15px;line-height:15px;color:#1c1c1c;font-weight:bold;font-family:'Liberation Sans'">Deployments</div>
<svg class="ic" style="left:774px;top:429px;color:#555" width="19" height="19" viewBox="0 0 24 24" stroke-width="1.9"><line x1="6" x2="6" y1="3" y2="15"/><circle cx="18" cy="6" r="3"/><circle cx="6" cy="18" r="3"/><path d="M18 9a9 9 0 0 1-9 9"/></svg>
<div class="a" style="left:802.5px;top:430.82px;font-size:15.5px;line-height:15.5px;color:#585858;font-weight:normal;font-family:'Liberation Sans';-webkit-text-stroke:0.22px #585858">Preview Environments</div>
<svg class="ic" style="left:1000px;top:429px;color:#555" width="19" height="19" viewBox="0 0 24 24" stroke-width="1.9"><ellipse cx="12" cy="5" rx="9" ry="3"/><path d="M3 5V19A9 3 0 0 0 21 19V5"/><path d="M3 12A9 3 0 0 0 21 12"/></svg>
<div class="a" style="left:1029px;top:430.82px;font-size:15.5px;line-height:15.5px;color:#585858;font-weight:normal;font-family:'Liberation Sans';-webkit-text-stroke:0.22px #585858">Environment Variables</div>
<svg class="ic" style="left:1228px;top:429px;color:#555" width="19" height="19" viewBox="0 0 24 24" stroke-width="1.9"><path d="M15 2H6a2 2 0 0 0-2 2v16a2 2 0 0 0 2 2h12a2 2 0 0 0 2-2V7Z"/><path d="M14 2v4a2 2 0 0 0 2 2h4"/><path d="M10 9H8"/><path d="M16 13H8"/><path d="M16 17H8"/></svg>
<div class="a" style="left:1256.7px;top:430.82px;font-size:15.5px;line-height:15.5px;color:#585858;font-weight:normal;font-family:'Liberation Sans';-webkit-text-stroke:0.22px #585858">Logs</div>
<svg class="ic" style="left:1333px;top:429px;color:#555" width="19" height="19" viewBox="0 0 24 24" stroke-width="1.9"><path d="M12.22 2h-.44a2 2 0 0 0-2 2v.18a2 2 0 0 1-1 1.73l-.43.25a2 2 0 0 1-2 0l-.15-.08a2 2 0 0 0-2.73.73l-.22.38a2 2 0 0 0 .73 2.730l.15.1a2 2 0 0 1 1 1.72v.51a2 2 0 0 1-1 1.74l-.15.09a2 2 0 0 0-.73 2.73l.22.38a2 2 0 0 0 2.73.73l.15-.08a2 2 0 0 1 2 0l.43.25a2 2 0 0 1 1 1.73V20a2 2 0 0 0 2 2h.44a2 2 0 0 0 2-2v-.18a2 2 0 0 1 1-1.73l.43-.25a2 2 0 0 1 2 0l.15.08a2 2 0 0 0 2.73-.73l.22-.39a2 2 0 0 0-.73-2.73l-.15-.08a2 2 0 0 1-1-1.74v-.5a2 2 0 0 1 1-1.74l.15-.09a2 2 0 0 0 .73-2.73l-.22-.38a2 2 0 0 0-2.73-.73l-.15.08a2 2 0 0 1-2 0l-.43-.25a2 2 0 0 1-1-1.73V4a2 2 0 0 0-2-2z"/><circle cx="12" cy="12" r="3"/></svg>
<div class="a" style="left:1362px;top:430.82px;font-size:15.5px;line-height:15.5px;color:#585858;font-weight:normal;font-family:'Liberation Sans';-webkit-text-stroke:0.22px #585858">Settings</div>
<div class="a" style="left:441px;top:499px;width:1311px;height:268px;background:#fff;border-radius:10px;border:1px solid #e8e8e8"></div>
<svg class="ic" style="left:471.5px;top:537.5px;color:#1a1a1a" width="22" height="22" viewBox="0 0 24 24" stroke-width="1.9"><line x1="6" x2="6" y1="3" y2="15"/><circle cx="18" cy="6" r="3"/><circle cx="6" cy="18" r="3"/><path d="M18 9a9 9 0 0 1-9 9"/></svg>
<div class="a" style="left:505.5px;top:539.58px;font-size:20.5px;line-height:20.5px;color:#141414;font-weight:bold;font-family:'Liberation Sans'">Source Information</div>
<div class="a" style="left:1536px;top:528px;width:187px;height:42px;background:#3863e3;border-radius:8px"></div>
<svg class="ic" style="left:1554px;top:539px;color:#fff" width="20" height="20" viewBox="0 0 24 24" stroke-width="2"><path d="M21 15v4a2 2 0 0 1-2 2H5a2 2 0 0 1-2-2v-4"/><polyline points="7 10 12 15 17 10"/><line x1="12" x2="12" y1="15" y2="3"/></svg>
<div class="a" style="left:1584px;top:542.50px;font-size:15.3px;line-height:15.3px;color:#fff;font-weight:normal;font-family:'Liberation Sans';letter-spacing:0.35px;-webkit-text-stroke:0.22px #fff">Re-deploy Latest</div>
<div class="a" style="left:472px;top:592.95px;font-size:17px;line-height:17px;color:#404040;font-weight:normal;font-family:'Liberation Sans';-webkit-text-stroke:0.22px #404040">Repository:</div>
<div class="a" style="left:569px;top:592.69px;font-size:17.3px;line-height:17.3px;color:#486bca;font-weight:normal;font-family:'Liberation Sans';-webkit-text-stroke:0.22px #486bca">stoicsoft/servercompass-meteor-demo</div>
<svg class="ic" style="left:869px;top:594px;color:#486bca" width="14" height="14" viewBox="0 0 24 24" stroke-width="2.2"><path d="M15 3h6v6"/><path d="M10 14 21 3"/><path d="M18 13v6a2 2 0 0 1-2 2H5a2 2 0 0 1-2-2V8a2 2 0 0 1 2-2h6"/></svg>
<div class="a" style="left:472px;top:631.05px;font-size:17px;line-height:17px;color:#404040;font-weight:normal;font-family:'Liberation Sans';-webkit-text-stroke:0.22px #404040">Branch:</div>
<div class="a" style="left:540px;top:634.36px;font-size:14px;line-height:14px;color:#2a2a2a;font-weight:normal;font-family:'Liberation Mono'">main</div>
<div class="a" style="left:471px;top:665px;width:1252px;height:2px;background:#efefef"></div>
<div class="a" style="left:472px;top:683.95px;font-size:17px;line-height:17px;color:#404040;font-weight:normal;font-family:'Liberation Sans';-webkit-text-stroke:0.22px #404040">Created:</div>
<div class="a" style="left:548px;top:683.74px;font-size:17.25px;line-height:17.25px;color:#262626;font-weight:normal;font-family:'Liberation Sans';-webkit-text-stroke:0.22px #262626">2/25/2026 at 6:29:26 PM</div>
<div class="a" style="left:472px;top:717.55px;font-size:17px;line-height:17px;color:#404040;font-weight:normal;font-family:'Liberation Sans';-webkit-text-stroke:0.22px #404040">Last Deployed:</div>
<div class="a" style="left:596.4px;top:717.72px;font-size:16.8px;line-height:16.8px;color:#262626;font-weight:normal;font-family:'Liberation Sans';-webkit-text-stroke:0.22px #262626">2/25/2026 at 10:22:19 PM</div>
<div class="a" style="left:441px;top:797px;width:1311px;height:291px;background:#fff;border-radius:10px;border:1px solid #e8e8e8"></div>
<div class="a" style="left:472.4px;top:832.18px;font-size:20.5px;line-height:20.5px;color:#141414;font-weight:bold;font-family:'Liberation Sans'">Deployment History</div>
<svg class="ic" style="left:1641.5px;top:833.5px;color:#555" width="19" height="19" viewBox="0 0 24 24" stroke-width="2"><path d="M21 12a9 9 0 0 0-9-9 9.75 9.75 0 0 0-6.74 2.74L3 8"/><path d="M3 3v5h5"/><path d="M3 12a9 9 0 0 0 9 9 9.75 9.75 0 0 0 6.74-2.74L21 16"/><path d="M16 16h5v5"/></svg>
<div class="a" style="left:1666px;top:835.29px;font-size:15.3px;line-height:15.3px;color:#555;font-weight:normal;font-family:'Liberation Sans';letter-spacing:0.28px;-webkit-text-stroke:0.22px #555">Refresh</div>
<div class="a" style="left:471px;top:879px;width:1252px;height:82px;background:#fff;border-radius:9px;border:1.2px solid #e6e6e6"></div>
<div class="a" style="left:492px;top:908px;width:93px;height:23px;background:#e2f6e6;border-radius:12px"></div>
<svg class="ic" style="left:501px;top:912.8px;color:#3d8a50" width="15" height="15" viewBox="0 0 24 24" stroke-width="2.1"><circle cx="12" cy="12" r="10"/><path d="m9 12 2 2 4-4"/></svg>
<div class="a" style="left:520.6px;top:913.14px;font-size:14.3px;line-height:14.3px;color:#3a8a4e;font-weight:normal;font-family:'Liberation Sans';letter-spacing:0.1px;-webkit-text-stroke:0.22px #3a8a4e">Success</div>
<div class="a" style="left:605.8px;top:901.77px;font-size:16.5px;line-height:16.5px;color:#1c1c1c;font-weight:normal;font-family:'Liberation Sans';-webkit-text-stroke:0.22px #1c1c1c">Git Push</div>
<div class="a" style="left:679.7px;top:904.40px;font-size:15px;line-height:15px;color:#7a7a7a;font-weight:normal;font-family:'Liberation Mono';letter-spacing:-0.8px">58eaf81</div>
<div class="a" style="left:749px;top:911px;width:5px;height:1.3px;background:#cfcfcf"></div>
<div class="a" style="left:765.2px;top:902.67px;font-size:14.5px;line-height:14.5px;color:#555;font-weight:normal;font-family:'Liberation Sans';-webkit-text-stroke:0.22px #555">Update main.ts</div>
<div class="a" style="left:874px;top:900px;width:99px;height:20px;background:#f2f2f2;border-radius:5px"></div>
<div class="a" style="left:881px;top:903.70px;font-size:12px;line-height:12px;color:#555;font-weight:normal;font-family:'Liberation Sans';letter-spacing:0.36px;-webkit-text-stroke:0.25px #555">GitHub Actions</div>
<div class="a" style="left:605.8px;top:924.57px;font-size:14.5px;line-height:14.5px;color:#7c7c7c;font-weight:normal;font-family:'Liberation Sans';-webkit-text-stroke:0.22px #7c7c7c">2/25/2026, 10:17:32 PM</div>
<div class="a" style="right:255.5px;top:913.07px;font-size:13.8px;line-height:13.8px;color:#707070;font-weight:normal;font-family:'Liberation Sans';-webkit-text-stroke:0.1px #707070;letter-spacing:0.25px">Duration: &lt;1s</div>
<svg class="ic" style="left:1684px;top:910px;color:#777" width="19" height="19" viewBox="0 0 24 24" stroke-width="1.6"><path d="m6 9 6 6 6-6"/></svg>
<div class="a" style="left:471px;top:976px;width:1252px;height:82.5px;background:#fff;border-radius:9px;border:1.2px solid #e6e6e6"></div>
<div class="a" style="left:492px;top:1005px;width:93px;height:23px;background:#e2f6e6;border-radius:12px"></div>
<svg class="ic" style="left:501px;top:1009.8px;color:#3d8a50" width="15" height="15" viewBox="0 0 24 24" stroke-width="2.1"><circle cx="12" cy="12" r="10"/><path d="m9 12 2 2 4-4"/></svg>
<div class="a" style="left:520.6px;top:1010.14px;font-size:14.3px;line-height:14.3px;color:#3a8a4e;font-weight:normal;font-family:'Liberation Sans';letter-spacing:0.1px;-webkit-text-stroke:0.22px #3a8a4e">Success</div>
<div class="a" style="left:606px;top:998.72px;font-size:16.8px;line-height:16.8px;color:#1c1c1c;font-weight:normal;font-family:'Liberation Sans';-webkit-text-stroke:0.22px #1c1c1c">Manual Deploy</div>
<div class="a" style="left:728px;top:997px;width:99px;height:20px;background:#f2f2f2;border-radius:5px"></div>
<div class="a" style="left:736px;top:1000.70px;font-size:12px;line-height:12px;color:#555;font-weight:normal;font-family:'Liberation Sans';letter-spacing:0.36px;-webkit-text-stroke:0.25px #555">GitHub Actions</div>
<div class="a" style="left:606px;top:1022.12px;font-size:14.8px;line-height:14.8px;color:#7c7c7c;font-weight:normal;font-family:'Liberation Sans';-webkit-text-stroke:0.22px #7c7c7c">2/25/2026, 6:29:26 PM</div>
<div class="a" style="right:255.5px;top:1010.20px;font-size:14px;line-height:14px;color:#707070;font-weight:normal;font-family:'Liberation Sans';-webkit-text-stroke:0.1px #707070;letter-spacing:0.22px">Duration: 4m 30s</div>
<svg class="ic" style="left:1684px;top:1008px;color:#777" width="19" height="19" viewBox="0 0 24 24" stroke-width="1.6"><path d="m6 9 6 6 6-6"/></svg>
<div class="a" style="left:757px;top:800px;width:609px;height:48px;background:#fff;box-shadow:0 1px 2px rgba(0,0,0,0.08)"></div>
<div class="a" style="left:768px;top:807.13px;font-size:39.3px;line-height:39.3px;color:#e04343;font-weight:normal;font-family:'Liberation Mono';-webkit-text-stroke:1.1px #e04343">Show git commit and title</div>
<svg class="a" style="left:690px;top:835px" width="70" height="70" viewBox="690 835 70 70">
<polygon points="752.3,844.5 750.9,843.5 719.5,878.5 723.5,881.5" fill="#e04040"/>
<polygon points="709.5,893.5 715,871 721,878 731.5,884" fill="#e04040"/>
</svg>
</div></div>
<div style="position:absolute;left:137px;top:137px;width:1646px;height:967px;border-radius:40px;border:1.5px solid rgba(255,255,255,0.85);pointer-events:none"></div>
</body></html>
